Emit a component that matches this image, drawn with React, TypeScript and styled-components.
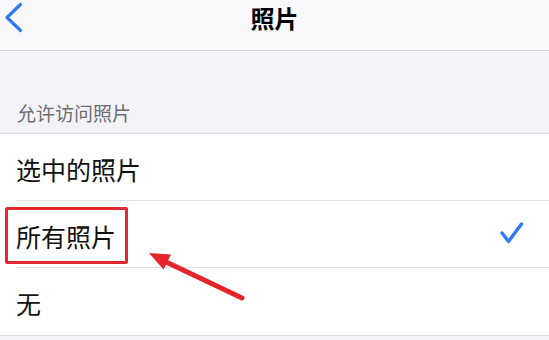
import styled, { createGlobalStyle } from "styled-components";

const GlobalStyle = createGlobalStyle`
  html, body {
    margin: 0;
    padding: 0;
    background: #f2f2f7;
  }
  body {
    font-family: "Noto Sans CJK SC", "Noto Sans", sans-serif;
    -webkit-font-smoothing: antialiased;
  }
`;

interface Option {
  id: string;
  label: string;
}

const options: Option[] = [
  { id: "selected", label: "选中的照片" },
  { id: "all", label: "所有照片" },
  { id: "none", label: "无" },
];

const selectedId = "all";

const BackIcon = () => (
  <svg width="26" height="36" viewBox="0 0 26 36" fill="none">
    <path
      d="M20.5 4.5 L7 17.5 L20.5 30.5"
      stroke="#3478f6"
      strokeWidth="3.2"
      strokeLinecap="round"
      strokeLinejoin="round"
    />
  </svg>
);

const CheckIcon = () => (
  <svg width="26" height="24" viewBox="0 0 26 24" fill="none">
    <path
      d="M3 11 L9.5 19.5 L22.5 2"
      stroke="#3478f6"
      strokeWidth="3.4"
      strokeLinecap="round"
      strokeLinejoin="round"
    />
  </svg>
);

const PointerArrow = () => (
  <ArrowLayer width="549" height="340" viewBox="0 0 549 340">
    <line
      x1="242"
      y1="298"
      x2="164"
      y2="261"
      stroke="#e5252a"
      strokeWidth="5"
      strokeLinecap="round"
    />
    <polygon points="149,253 171,254.5 163.5,269.5" fill="#e5252a" />
  </ArrowLayer>
);

export default function App() {
  return (
    <>
      <GlobalStyle />
      <Screen>
        <NavBar>
          <BackButton aria-label="返回">
            <BackIcon />
          </BackButton>
          <Title>照片</Title>
          <span />
        </NavBar>

        <SectionHeader>允许访问照片</SectionHeader>

        <List>
          {options.map((item) => (
            <Row key={item.id}>
              <RowInner>
                <Label highlighted={item.id === selectedId}>
                  {item.label}
                </Label>
                {item.id === selectedId && (
                  <Check>
                    <CheckIcon />
                  </Check>
                )}
              </RowInner>
            </Row>
          ))}
        </List>

        <PointerArrow />
      </Screen>
    </>
  );
}

const Screen = styled.div`
  position: relative;
  width: 549px;
  height: 340px;
  overflow: hidden;
  background: #f2f2f7;
`;

const NavBar = styled.header`
  display: grid;
  grid-template-columns: 1fr auto 1fr;
  align-items: start;
  height: 50px;
  background: #f9f9fb;
  border-bottom: 1px solid #d6d6da;
`;

const BackButton = styled.button`
  display: flex;
  justify-self: start;
  padding: 0;
  margin: 0;
  border: none;
  background: none;
  height: 36px;
`;

const Title = styled.h1`
  margin: 0;
  font-size: 24px;
  font-weight: 700;
  color: #000;
  line-height: 36px;
`;

const SectionHeader = styled.div`
  display: flex;
  align-items: flex-end;
  height: 82px;
  box-sizing: border-box;
  padding: 0 0 8px 17px;
  font-size: 19px;
  line-height: 24px;
  color: #6d6d72;
`;

const List = styled.ul`
  list-style: none;
  margin: 0;
  padding: 0;
  background: #fff;
  border-top: 1px solid #dcdce0;
  border-bottom: 1px solid #dcdce0;
`;

const Row = styled.li`
  padding-left: 16px;

  &:last-child > div {
    border-bottom: none;
  }
`;

const RowInner = styled.div`
  display: flex;
  align-items: center;
  justify-content: space-between;
  height: 67px;
  box-sizing: border-box;
  padding: 3px 24px 0 0;
  border-bottom: 1px solid #e3e3e6;
`;

const Label = styled.span<{ highlighted: boolean }>`
  position: relative;
  font-size: 25px;
  line-height: 32px;
  color: #111;

  &::after {
    content: "";
    display: ${({ highlighted }) => (highlighted ? "block" : "none")};
    position: absolute;
    left: -11px;
    right: -12px;
    top: -13px;
    bottom: -12px;
    border: 3px solid #e02a2f;
    border-radius: 2px;
  }
`;

const Check = styled.span`
  display: flex;
  margin-top: -3px;
`;

const ArrowLayer = styled.svg`
  position: absolute;
  top: 0;
  left: 0;
  pointer-events: none;
`;
